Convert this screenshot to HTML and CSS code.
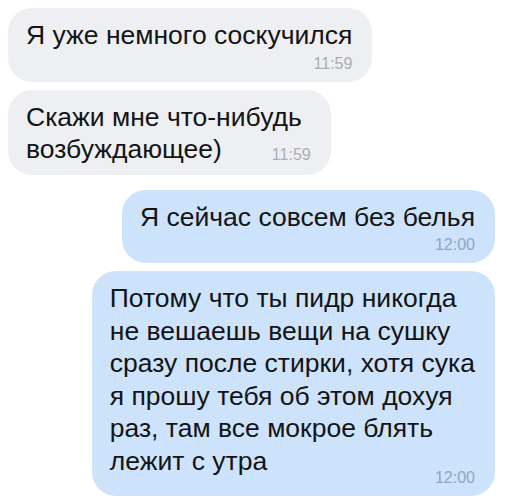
FILE: index.html
```html
<!DOCTYPE html>
<html lang="ru">
<head>
<meta charset="utf-8">
<title>Чат</title>
<link rel="stylesheet" href="styles.css">
</head>
<body>
<div class="chat">
  <div class="msg in">
    <div class="bubble">
      <p class="text">Я уже немного соскучился</p>
      <span class="time time-below">11:59</span>
    </div>
  </div>
  <div class="msg in">
    <div class="bubble">
      <p class="text">Скажи мне что-нибудь<br>возбуждающее)<span class="time time-inline">11:59</span></p>
    </div>
  </div>
  <div class="msg out group-start">
    <div class="bubble">
      <p class="text">Я сейчас совсем без белья</p>
      <span class="time time-below">12:00</span>
    </div>
  </div>
  <div class="msg out">
    <div class="bubble">
      <p class="text">Потому что ты пидр никогда<br>не вешаешь вещи на сушку<br>сразу после стирки, хотя сука<br>я прошу тебя об этом дохуя<br>раз, там все мокрое блять<br>лежит с утра<span class="time time-low">12:00</span></p>
    </div>
  </div>
</div>
</body>
</html>
```
FILE: styles.css
```css
html, body {
  margin: 0;
  padding: 0;
  background: #ffffff;
}

body {
  font-family: "Liberation Sans", Arial, sans-serif;
  color: #141414;
}

.chat {
  display: flex;
  flex-direction: column;
  gap: 8px;
  padding: 8px 14px 0 8px;
}

.msg {
  display: flex;
}

.msg.in {
  justify-content: flex-start;
}

.msg.out {
  justify-content: flex-end;
}

.msg.group-start {
  margin-top: 7px;
}

.bubble {
  display: flex;
  flex-direction: column;
  border-radius: 24px;
  padding: 11px 20px 9px 18px;
  background: #eeeff2;
}

.msg.out .bubble {
  background: #cde3fb;
}

.text {
  margin: 0;
  font-size: 26.5px;
  line-height: 32.5px;
  display: flow-root;
}

.time {
  font-size: 16px;
  line-height: 18px;
  color: #a9adb4;
}

.msg.out .time {
  color: #8ea6c2;
}

.time-below {
  align-self: flex-end;
  margin-top: 3px;
}

.time-inline {
  float: right;
  margin: 13px 0 0 50px;
}

.time-low {
  float: right;
  margin: 24px 0 0 50px;
}
```
